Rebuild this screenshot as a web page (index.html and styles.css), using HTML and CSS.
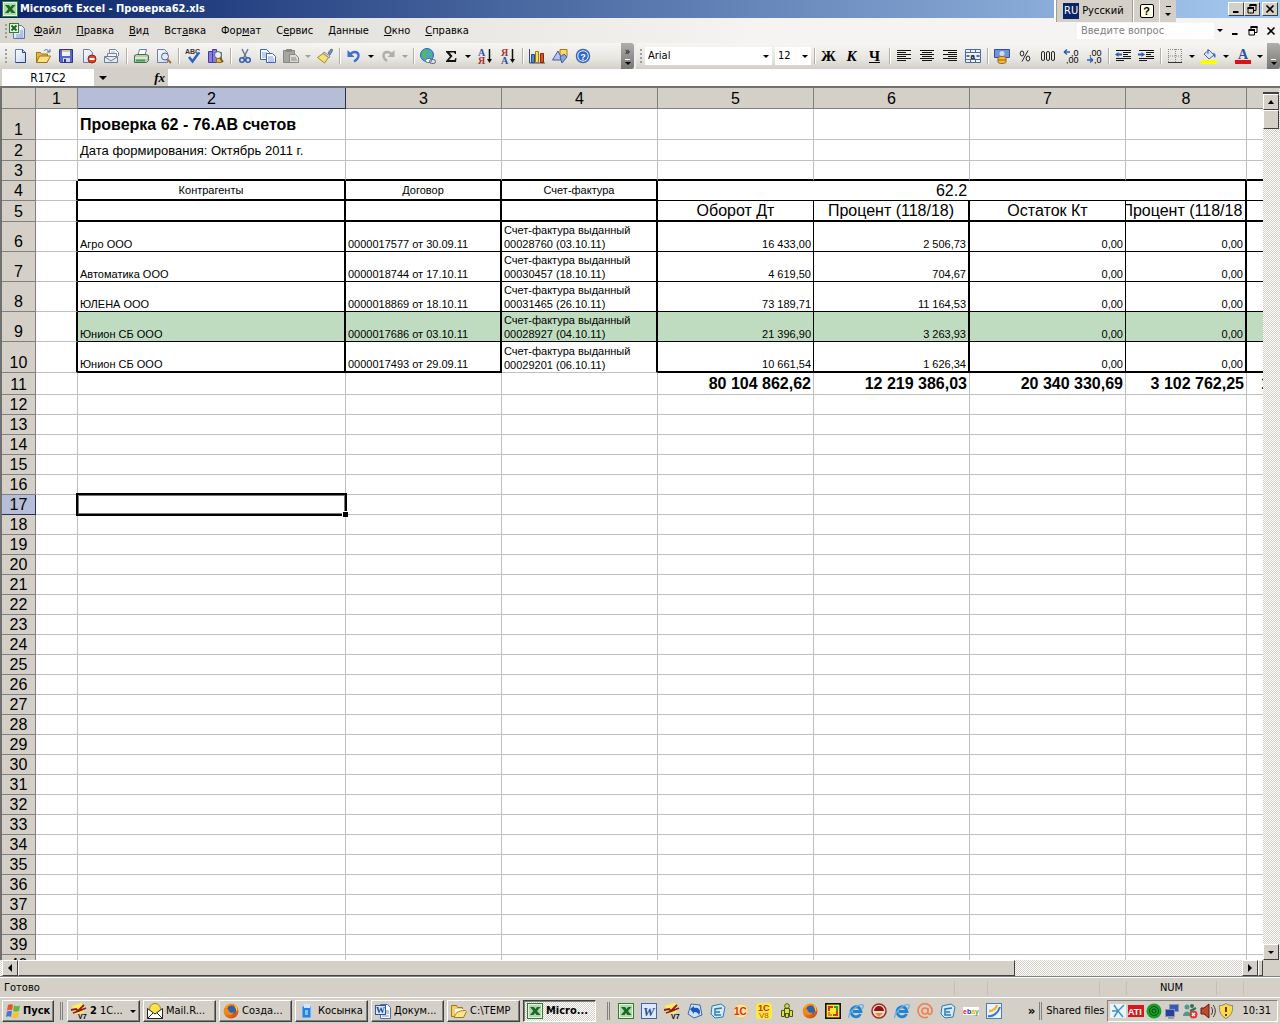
FILE: index.html
```html
<!DOCTYPE html>
<html lang="ru">
<head>
<meta charset="utf-8">
<title>Microsoft Excel - Проверка62.xls</title>
<link rel="stylesheet" href="styles.css">
</head>
<body>
<svg class="paints" aria-hidden="true">
  <defs>
    <linearGradient id="g-paper" x1="0" y1="0" x2="1" y2="1"><stop offset="0" stop-color="#fff"/><stop offset="1" stop-color="#c3d4f2"/></linearGradient>
    <linearGradient id="g-fox" x1="0" y1="0" x2="1" y2="1"><stop offset="0" stop-color="#ffb52e"/><stop offset="1" stop-color="#c83c0c"/></linearGradient>
  </defs>
</svg>
<svg class="sprite" aria-hidden="true">
  <symbol id="excel" viewBox="0 0 16 16"><rect x=".5" y=".5" width="15" height="15" fill="#e4f2e0" stroke="#2f7d32"/><rect x="2" y="2" width="12" height="12" fill="#b5d6ae"/><path d="M3 4h4l1.500 2L10 4h3.500L10 8l3.500 4h-4L8 10l-1.500 2H3l3.300-4z" fill="#176b22"/></symbol>
  <symbol id="book" viewBox="0 0 16 16"><path d="M4.500 2.500h8l3 3v10h-11z" fill="url(#g-paper)" stroke="#5a78b8"/><path d="M7 12h7M7 14h7M11 8h3M11 10h3" stroke="#8aa2d0"/><rect x=".5" y=".5" width="9" height="9" fill="#e4f2e0" stroke="#2f7d32"/><path d="M2.500 2.500l5 5M7.500 2.500l-5 5" stroke="#176b22" stroke-width="2"/></symbol>
  <symbol id="new" viewBox="0 0 16 16"><path d="M3.500 1.500h7l3 3v10h-10z" fill="url(#g-paper)" stroke="#6a7fae"/><path d="M10.500 1.500v3h3M13.500 5v9.500h-10" fill="none" stroke="#2c4270"/></symbol>
  <symbol id="open" viewBox="0 0 16 16"><path d="M1.500 14V4.500h4l1 1.500h6v8z" fill="#e8b93c" stroke="#a0720e"/><path d="M1.500 14.500L4.500 8h11l-3.500 6.500z" fill="#ffe08a" stroke="#a0720e"/><path d="M9 3c1-2 4-2 5 1M12 4h3V1" fill="none" stroke="#4a6fb0"/></symbol>
  <symbol id="save" viewBox="0 0 16 16"><path d="M1.500 1.500h13v13h-12l-1-1z" fill="#5a63c8" stroke="#2c3390"/><path d="M4 2h8v6H4z" fill="#eef2ff"/><path d="M4 3h8" stroke="#e88a30"/><path d="M5 10h7v4H5z" fill="#cfd5ef"/><path d="M6 11h2v3H6z" fill="#2c3390"/></symbol>
  <symbol id="perm" viewBox="0 0 16 16"><path d="M2.500 1.500h6l3 3v10h-9z" fill="url(#g-paper)" stroke="#6a7fae"/><circle cx="11" cy="11" r="4" fill="#d8432a" stroke="#942410"/><path d="M8.500 11h5" stroke="#fff" stroke-width="2"/></symbol>
  <symbol id="mail" viewBox="0 0 16 16"><path d="M5.500 7V1.500h6l3 3V8" fill="#fff" stroke="#7585a5"/><path d="M7 4h4M7 6h6" stroke="#9fb0cc"/><path d="M3.500 5.500h9v4h-9z" fill="#f4f6fa" stroke="#7585a5"/><path d="M.500 8.500h13v6H.500z" fill="#e6eaf3" stroke="#6b7a99"/><path d="M1 9l6 4 6-4" fill="none" stroke="#6b7a99"/></symbol>
  <symbol id="print" viewBox="0 0 16 16"><path d="M5 7l1.500-5.500h7L12 7z" fill="#fff" stroke="#6a7f9e"/><path d="M1.500 7.500l2-1h10l2 1v5l-2 2h-12z" fill="#b9cdb5" stroke="#466a50"/><path d="M2 10h12" stroke="#fff"/><path d="M3 12.500h9" stroke="#3da33d" stroke-width="2"/></symbol>
  <symbol id="preview" viewBox="0 0 16 16"><path d="M1.500 1.500h7l3 3v10h-10z" fill="url(#g-paper)" stroke="#6a7fae"/><circle cx="9" cy="8.500" r="3.500" fill="#dcebf8" stroke="#55667c"/><path d="M11.500 11.500l3.500 3.500" stroke="#a66c2c" stroke-width="2"/></symbol>
  <symbol id="spell" viewBox="0 0 16 16"><text x="0" y="6" font-family="Liberation Sans" font-size="7" font-weight="bold" fill="#333">ABC</text><path d="M4 9l3.500 4.500L14 4.500" fill="none" stroke="#2d62c4" stroke-width="2.500"/></symbol>
  <symbol id="research" viewBox="0 0 16 16"><path d="M.500 3.500h4v11h-4zM4.500 1.500h4v13h-4z" fill="#8c7ce0" stroke="#4a3ca0"/><path d="M8.500 4.500h5v10h-5z" fill="#e3b74a" stroke="#946b14"/><circle cx="10" cy="7" r="3.500" fill="#e6f0fa" stroke="#55667c"/><path d="M12 10l3 4" stroke="#7a5c20" stroke-width="2"/></symbol>
  <symbol id="cut" viewBox="0 0 16 16"><path d="M5 1l4.500 9M11 1L6.500 10" stroke="#667894" stroke-width="1.500"/><circle cx="5" cy="12" r="2.300" fill="none" stroke="#2b5db8" stroke-width="1.500"/><circle cx="11" cy="12" r="2.300" fill="none" stroke="#2b5db8" stroke-width="1.500"/></symbol>
  <symbol id="copy" viewBox="0 0 16 16"><path d="M.500 1.500h6l3 3v7h-9z" fill="#fff" stroke="#3b62b0"/><path d="M2 5h5M2 7h5M2 9h5" stroke="#7f9cd6"/><path d="M6.500 5.500h6l3 3v6h-9z" fill="#fff" stroke="#3b62b0"/><path d="M8 9h5M8 11h6M8 13h6" stroke="#7f9cd6"/></symbol>
  <symbol id="paste" viewBox="0 0 16 16"><path d="M.500 2.500h11v12H.500z" fill="#a8a6a2" stroke="#8a8884"/><path d="M3 1h6v3H3z" fill="#8a8884"/><path d="M6.500 6.500h6l3 3v5h-9z" fill="#dedcd8" stroke="#8a8884"/><path d="M8 10h5M8 12h6" stroke="#8a8884"/></symbol>
  <symbol id="brush" viewBox="0 0 16 16"><path d="M11 5l3-4 2 1-3 5z" fill="#8190b8" stroke="#45527a" stroke-width=".7"/><path d="M7 4l6 4-1 2-6-4z" fill="#cfd6e4" stroke="#5f6a86" stroke-width=".7"/><path d="M6 5.500L.500 9.500l7 5.500 4-5.500z" fill="#f3e27a" stroke="#a08a20"/></symbol>
  <symbol id="undo" viewBox="0 0 16 16"><path d="M4 7c2-4 8-4 8.500 0 .300 3-2 5-4.500 6.500" fill="none" stroke="#3f6fd0" stroke-width="2.300"/><path d="M1.500 2v7h7z" fill="#3f6fd0"/></symbol>
  <symbol id="redo" viewBox="0 0 16 16"><path d="M12 7c-2-4-8-4-8.500 0-.300 3 2 5 3.500 6" fill="none" stroke="#b0aeaa" stroke-width="2.300"/><path d="M14.500 2v7h-7z" fill="#b0aeaa"/></symbol>
  <symbol id="link" viewBox="0 0 16 16"><circle cx="7" cy="7" r="6.500" fill="#4c9fdd" stroke="#256a9c"/><path d="M3 3c3-3 6 0 4 2s1 3-1 5-5-2-3-7M9 3l3 2-1 4-2-2z" fill="#55b955"/><rect x="5.500" y="10.500" width="6" height="4" rx="2" fill="#fff" stroke="#56698c"/><rect x="9.500" y="11.500" width="6" height="4" rx="2" fill="none" stroke="#56698c"/></symbol>
  <symbol id="sum" viewBox="0 0 16 16"><path d="M3 3h10v3h-1l-1-1.500H6.500L9.500 8 6 12h5.500l1-2h1L13 14H3v-1l4-4.500L3 4z" fill="#111"/></symbol>
  <symbol id="sort-a" viewBox="0 0 16 16"><text x="1" y="8" font-family="Liberation Serif" font-size="10" font-weight="bold" fill="#2c4fa8">А</text><text x="1" y="16" font-family="Liberation Serif" font-size="10" font-weight="bold" fill="#b03030">Я</text><path d="M12.500 1v11" stroke="#111" stroke-width="1.500"/><path d="M10 11h5l-2.500 4z" fill="#111"/></symbol>
  <symbol id="sort-z" viewBox="0 0 16 16"><text x="1" y="8" font-family="Liberation Serif" font-size="10" font-weight="bold" fill="#b03030">Я</text><text x="1" y="16" font-family="Liberation Serif" font-size="10" font-weight="bold" fill="#2c4fa8">А</text><path d="M12.500 1v11" stroke="#111" stroke-width="1.500"/><path d="M10 11h5l-2.500 4z" fill="#111"/></symbol>
  <symbol id="chart" viewBox="0 0 16 16"><path d="M.500 1v14H16" fill="none" stroke="#3c4a6c"/><path d="M2.500 6.500h3v8h-3z" fill="#4c88e0" stroke="#1f4c98"/><path d="M6.500 3.500h3v11h-3z" fill="#ffdc50" stroke="#a0780c"/><path d="M11.500 5.500h3v9h-3z" fill="#e0502c" stroke="#8c2408"/></symbol>
  <symbol id="draw" viewBox="0 0 16 16"><path d="M8 1.500h7v7H8z" fill="#ffd964" stroke="#a67c14"/><path d="M6 3L.500 12h10z" fill="#b6c4ee" stroke="#4659a0"/><path d="M8 9l4-3 3 3-5 6z" fill="#8ca4dc" stroke="#4659a0"/></symbol>
  <symbol id="help" viewBox="0 0 16 16"><circle cx="8" cy="8" r="6.500" fill="#fff" stroke="#3465b8" stroke-width="1.500"/><circle cx="8" cy="8" r="4.800" fill="#2f67cf"/><text x="5.300" y="11.500" font-family="Liberation Sans" font-size="9" font-weight="bold" fill="#fff">?</text></symbol>
  <symbol id="al-l" viewBox="0 0 16 16"><path d="M1 2.500h14M1 4.500h9M1 6.500h14M1 8.500h9M1 10.500h14M1 12.500h9" stroke="#111"/></symbol>
  <symbol id="al-c" viewBox="0 0 16 16"><path d="M1 2.500h14M3 4.500h10M1 6.500h14M3 8.500h10M1 10.500h14M3 12.500h10" stroke="#111"/></symbol>
  <symbol id="al-r" viewBox="0 0 16 16"><path d="M1 2.500h14M6 4.500h9M1 6.500h14M6 8.500h9M1 10.500h14M6 12.500h9" stroke="#111"/></symbol>
  <symbol id="merge" viewBox="0 0 16 16"><path d="M.500 1.500h15v13H.500zM.500 4.500h15M.500 11.500h15M5.500 1.500v3M10.500 1.500v3M5.500 11.500v3M10.500 11.500v3" fill="#eef3fb" stroke="#4a68a4"/><text x="5.500" y="10.500" font-family="Liberation Sans" font-size="8" font-weight="bold">a</text><path d="M1.500 8h3M11.500 8h3" stroke="#22458c" stroke-width="1.500"/></symbol>
  <symbol id="money" viewBox="0 0 16 16"><path d="M.500 1.500h15v8H.500z" fill="#6f93dc" stroke="#2e509c"/><circle cx="8" cy="5.500" r="2.500" fill="#cddcf8"/><path d="M4 10c0-2 8-2 8 0v4c0 2-8 2-8 0z" fill="#f5b83a" stroke="#9a650c"/><path d="M4 12h8" stroke="#9a650c"/></symbol>
  <symbol id="pct" viewBox="0 0 16 16"><ellipse cx="5" cy="5.500" rx="1.800" ry="2.500" fill="none" stroke="#222"/><ellipse cx="11" cy="10.500" rx="1.800" ry="2.500" fill="none" stroke="#222"/><path d="M11 2.500l-6 11" stroke="#222"/></symbol>
  <symbol id="thou" viewBox="0 0 16 16"><g fill="none" stroke="#222"><rect x="1.500" y="3.500" width="3" height="9" rx="1.500"/><rect x="6.500" y="3.500" width="3" height="9" rx="1.500"/><rect x="11.500" y="3.500" width="3" height="9" rx="1.500"/></g></symbol>
  <symbol id="dec-up" viewBox="0 0 16 16"><path d="M1 4h6M1 4l3-2.500M1 4l3 2.500" stroke="#2b5db8" stroke-width="1.300"/><text x="8" y="8" font-family="Liberation Sans" font-size="9">,0</text><text x="3" y="15" font-family="Liberation Sans" font-size="9">,00</text></symbol>
  <symbol id="dec-dn" viewBox="0 0 16 16"><path d="M1 12h6M7 12L4 9.500M7 12l-3 2.500" stroke="#2b5db8" stroke-width="1.300"/><text x="3" y="8" font-family="Liberation Sans" font-size="9">,00</text><text x="8" y="15" font-family="Liberation Sans" font-size="9">,0</text></symbol>
  <symbol id="outdent" viewBox="0 0 16 16"><path d="M1 2.500h15M8 4.500h8M8 6.500h5M8 8.500h8M1 10.500h15M1 12.500h8" stroke="#111" stroke-width="1.200"/><path d="M0 6.500L3.500 4v1.500H7v2H3.500V9z" fill="#2b5db8"/></symbol>
  <symbol id="indent" viewBox="0 0 16 16"><path d="M1 2.500h15M8 4.500h8M8 6.500h5M8 8.500h8M1 10.500h15M1 12.500h8" stroke="#111" stroke-width="1.200"/><path d="M7 6.500L3.500 4v1.500H0v2h3.500V9z" fill="#2b5db8"/></symbol>
  <symbol id="borders" viewBox="0 0 16 16"><path d="M1.500 1v13M8.500 1v13M14.500 1v13M1 1.500h14M1 8h14" stroke="#888" stroke-dasharray="1 1"/><path d="M1 14.500h14" stroke="#333"/></symbol>
  <symbol id="fill" viewBox="0 0 16 16"><path d="M3 6l5-4 5 5-5 4z" fill="#dbe6f8" stroke="#4a64a0"/><path d="M7 1v5" stroke="#4a64a0"/><path d="M12 5c3 0 3 3 2 5-1-1-2-2-2-5" fill="#3f74cc"/><path d="M0 12h16v4H0z" fill="#ffff00"/></symbol>
  <symbol id="fcolor" viewBox="0 0 16 16"><text x="3" y="11" font-family="Liberation Serif" font-size="14" font-weight="bold" fill="#2c4fa8">А</text><path d="M0 12h16v4H0z" fill="#e01010"/></symbol>
  <symbol id="restore" viewBox="0 0 10 10"><path d="M3 1h6v5.500H7M3 3V1" fill="none" stroke="#000"/><path d="M2.500 1h7" stroke="#000" stroke-width="2"/><path d="M1 4h5.500v5H1z" fill="none" stroke="#000"/><path d="M.500 4h6.500" stroke="#000" stroke-width="2"/></symbol>
  <symbol id="close" viewBox="0 0 10 10"><path d="M1.500 1.500l7 7M8.500 1.500l-7 7" stroke="#000" stroke-width="1.600"/></symbol>
  <symbol id="min" viewBox="0 0 10 10"><path d="M2 8h5.500" stroke="#000" stroke-width="2"/></symbol>
  <symbol id="flag" viewBox="0 0 16 16"><path d="M3 2c2-1 4-1 5 0L7 7.500c-2-1-3-1-5 0z" fill="#e2562a"/><path d="M9 2.500c2 1 4 1 6 0L14 8c-2 1-4 1-6 0z" fill="#6cb33e"/><path d="M2 8.500c2-1 3-1 5 0L6 14c-2-1-3-1-5 0z" fill="#3c78d8"/><path d="M8 9c2 1 4 1 6 0l-1 5.500c-2 1-4 1-6 0z" fill="#f5c52c"/></symbol>
  <symbol id="onec7" viewBox="0 0 16 16"><path d="M1 3l9-3 5 4-3 6-9 1z" fill="#ffee58"/><path d="M0 7l5-1 2 2 6-6M2 10l6-2 7-3" fill="none" stroke="#8c1c28" stroke-width="1.800"/><text x="7" y="16" font-family="Liberation Sans" font-size="7" font-weight="bold">V7</text></symbol>
  <symbol id="envelope" viewBox="0 0 16 16"><circle cx="8" cy="6" r="5.500" fill="#ffe24a" stroke="#a08a10"/><path d="M.500 5.500L8 11l7.500-5.500v10H.500z" fill="#fff" stroke="#222"/><path d="M.500 15.500L6 10M15.500 15.500L10 10" stroke="#222"/></symbol>
  <symbol id="fox" viewBox="0 0 16 16"><circle cx="8" cy="8" r="7.500" fill="url(#g-fox)"/><circle cx="8.500" cy="7" r="4.500" fill="#2f5fae"/><path d="M1 5c3 0 4 1 5 3s3 2 5 1c-1 3-4 4-7 2S1 8 1 5z" fill="#f08a1c"/><path d="M11 2c3 1 4 4 3 7-1-2-1-4-3-7z" fill="#ffd040"/></symbol>
  <symbol id="cards" viewBox="0 0 16 16"><path d="M3 3h9v12H3z" fill="#2a80dc" stroke="#a9d6ff"/><path d="M5 1h6v4H5z" fill="#cfe8fb"/><path d="M6 7h3v5H6z" fill="#7fc4ff"/></symbol>
  <symbol id="worddoc" viewBox="0 0 16 16"><path d="M5.500 1.500h7l3 3v11h-10z" fill="#fff" stroke="#4a6cb4"/><path d="M11 8h3M11 10h3M7 13h7" stroke="#6b8ccc"/><rect x=".5" y="2.500" width="10" height="9" fill="#dce8fb" stroke="#2c56a8"/><text x="1" y="10" font-family="Liberation Serif" font-size="9" font-weight="bold" fill="#1d459c">W</text></symbol>
  <symbol id="folder" viewBox="0 0 16 16"><path d="M.500 2.500h5l1 2h5v9H.500z" fill="#f6cf5e" stroke="#a07a18"/><path d="M4 6h8v7H4z" fill="#fff"/><path d="M3.500 14.500c0-4 3-7 11-7l1 1-3 6z" fill="#ffe588" stroke="#a07a18"/></symbol>
  <symbol id="word" viewBox="0 0 16 16"><rect x=".5" y=".5" width="15" height="15" fill="#dfe9fb" stroke="#3f66b4"/><text x="2" y="13" font-family="Liberation Serif" font-size="13" font-weight="bold" font-style="italic" fill="#23509f">W</text></symbol>
  <symbol id="sync" viewBox="0 0 16 16"><path d="M4 1l9 1 2 10-8 3-6-4z" fill="#cfe2fa" stroke="#3a68b4"/><path d="M3 6l4-3v2c4-1 6 1 6 4l-1 4c0-3-2-4-5-4v2z" fill="#1c58b8"/></symbol>
  <symbol id="send" viewBox="0 0 16 16"><path d="M2 3l9-2 4 3-2 10-8 1-4-4z" fill="#d6ebfa" stroke="#2c7cb0"/><path d="M12 5L5 6v6h6M6 9h4" fill="none" stroke="#2c7cb0" stroke-width="1.500"/></symbol>
  <symbol id="onec" viewBox="0 0 16 16"><circle cx="8" cy="8" r="7" fill="#ffe9a0" stroke="#f0cb80"/><text x="1" y="12" font-family="Liberation Sans" font-size="10" font-weight="bold" fill="#d8321c">1С</text></symbol>
  <symbol id="onec8" viewBox="0 0 16 16"><rect width="16" height="16" rx="3" fill="#ffe840"/><text x="2" y="8" font-family="Liberation Sans" font-size="9" font-weight="bold" fill="#d02810">1С</text><text x="3" y="15" font-family="Liberation Sans" font-size="8" fill="#b05010">V8</text></symbol>
  <symbol id="robot" viewBox="0 0 16 16"><g fill="#d8e050" stroke="#4c5410"><circle cx="8" cy="3" r="2.300"/><path d="M5.500 5.500h5v5h-5zM2.500 7.500h3v6h-3zM10.500 7.500h3v6h-3zM6.500 10.500h3v4h-3z"/></g></symbol>
  <symbol id="squares" viewBox="0 0 16 16"><rect x=".8" y=".8" width="14.400" height="14.400" fill="#ffe930" stroke="#111" stroke-width="1.600"/><path d="M4 8V4h4" fill="none" stroke="#e03020" stroke-width="2"/><path d="M9 4h3v4" fill="none" stroke="#28a040" stroke-width="2"/><path d="M12 8v4H8" fill="none" stroke="#e03020" stroke-width="2"/><path d="M7 12H4v-3" fill="none" stroke="#e08020" stroke-width="2"/></symbol>
  <symbol id="ie" viewBox="0 0 16 16"><path d="M12.500 11A5 5 0 1 1 13 8.500H5" fill="none" stroke="#2483cf" stroke-width="2.800"/><path d="M1 15C-1 11 10 0 15 2c1 1 0 2-1 4" fill="none" stroke="#5fb4ee" stroke-width="1.300"/></symbol>
  <symbol id="disc" viewBox="0 0 16 16"><circle cx="8" cy="8" r="7" fill="#f4dcd4" stroke="#a82820" stroke-width="1.500"/><path d="M3 8a5 5 0 0 1 10 0z" fill="#8c1414"/><path d="M4 10h8l-4 4z" fill="#e09030"/></symbol>
  <symbol id="at" viewBox="0 0 16 16"><path d="M11 5v5c0 2 4 2 4-2A7 7 0 1 0 11 14M11 8a3 3 0 1 1-6 0 3 3 0 0 1 6 0" fill="none" stroke="#f0804c" stroke-width="1.600"/></symbol>
  <symbol id="ebay" viewBox="0 0 16 16"><rect y="4" width="16" height="8" fill="#fff"/><text x="0" y="11" font-family="Liberation Sans" font-size="7" font-weight="bold"><tspan fill="#e02020">e</tspan><tspan fill="#2030c0">b</tspan><tspan fill="#e8b800">a</tspan><tspan fill="#60a818">y</tspan></text></symbol>
  <symbol id="pen" viewBox="0 0 16 16"><rect x=".5" y=".5" width="15" height="15" fill="#eaf3fd" stroke="#4d7cc0"/><path d="M2 13c5 1 10-3 12-9" fill="none" stroke="#3c78d0" stroke-width="2"/><path d="M3 8c4 0 7-2 8-6" fill="none" stroke="#f0b430" stroke-width="2.500"/></symbol>
  <symbol id="snow" viewBox="0 0 16 16"><path d="M0 1h16v14H0z" fill="#eef5fa"/><path d="M2 8h6M8 8l6-6M8 8l5 6M8 8L4 2M8 8l-4 6" stroke="#3c94c8" stroke-width="1.500"/></symbol>
  <symbol id="ati" viewBox="0 0 16 16"><rect y="2" width="16" height="12" fill="#d81818"/><text x="0" y="12" font-family="Liberation Sans" font-size="9" font-weight="bold" fill="#fff">ATI</text></symbol>
  <symbol id="radar" viewBox="0 0 16 16"><circle cx="8" cy="8" r="7.500" fill="#17a02a"/><circle cx="8" cy="8" r="4.500" fill="none" stroke="#064d10"/><circle cx="8" cy="8" r="2" fill="none" stroke="#064d10"/></symbol>
  <symbol id="net" viewBox="0 0 16 16"><rect x="5.500" y="1.500" width="9" height="7" fill="#3a56c0" stroke="#8a94b4"/><rect x="1.500" y="6.500" width="9" height="7" fill="#26409c" stroke="#8a94b4"/><path d="M4 15h6" stroke="#667"/></symbol>
  <symbol id="users" viewBox="0 0 16 16"><circle cx="5" cy="4" r="2.500" fill="#4c9c8c"/><circle cx="10" cy="3" r="2" fill="#2c7060"/><path d="M1 13c0-6 8-6 8 0z" fill="#4c9c8c"/><path d="M8 8l6-3" stroke="#2c7060" stroke-width="2"/><circle cx="11.500" cy="11.500" r="4" fill="#d83838"/><path d="M10 10l3 3M13 10l-3 3" stroke="#fff" stroke-width="1.400"/></symbol>
  <symbol id="sound" viewBox="0 0 16 16"><path d="M1 5h3l5-4v14l-5-4H1z" fill="#c44830" stroke="#601c10"/><path d="M11 4c2 2 2 6 0 8M13 2c3 3 3 9 0 12" fill="none" stroke="#403028"/></symbol>
  <symbol id="shield" viewBox="0 0 16 16"><path d="M8 .5c2 1.500 4 2 6.500 2 .500 6-1 10-6.500 13C2.500 12.500 1 8.500 1.500 2.500c2.500 0 4.500-.500 6.500-2z" fill="#ffd94a" stroke="#8a8468"/><path d="M8 4v5M8 11v2" stroke="#604800" stroke-width="2"/></symbol>
</svg>

<header class="titlebar">
  <svg class="ic"><use href="#excel"/></svg>
  <h1 class="title">Microsoft Excel - Проверка62.xls</h1>
  <div class="langbar">
    <button class="lang"><span class="ru">RU</span>Русский</button>
    <button class="langhelp" aria-label="Справка по языковой панели"><span>?</span></button>
    <button class="langopt" aria-label="Параметры"><i class="dash"></i><i class="tri"></i></button>
  </div>
  <div class="winbtns">
    <button aria-label="Свернуть"><svg><use href="#min"/></svg></button>
    <button aria-label="Восстановить"><svg><use href="#restore"/></svg></button>
    <button class="last" aria-label="Закрыть"><svg><use href="#close"/></svg></button>
  </div>
</header>

<nav class="menubar">
  <i class="grip"></i>
  <svg class="ic"><use href="#book"/></svg>
  <button class="menu"><u>Ф</u>айл</button>
  <button class="menu"><u>П</u>равка</button>
  <button class="menu"><u>В</u>ид</button>
  <button class="menu">Вст<u>а</u>вка</button>
  <button class="menu">Фор<u>м</u>ат</button>
  <button class="menu">С<u>е</u>рвис</button>
  <button class="menu"><u>Д</u>анные</button>
  <button class="menu"><u>О</u>кно</button>
  <button class="menu"><u>С</u>правка</button>
  <input class="ask" type="text" placeholder="Введите вопрос" aria-label="Введите вопрос">
  <button class="arr" aria-label="Список вопросов"><i class="tri"></i></button>
  <div class="docbtns">
    <button aria-label="Свернуть окно"><svg><use href="#min"/></svg></button>
    <button aria-label="Восстановить окно"><svg><use href="#restore"/></svg></button>
    <button aria-label="Закрыть окно"><svg><use href="#close"/></svg></button>
  </div>
</nav>

<div class="toolbars">
  <div class="tools standard">
    <i class="grip"></i>
    <button class="tb" aria-label="Создать"><svg><use href="#new"/></svg></button>
    <button class="tb" aria-label="Открыть"><svg><use href="#open"/></svg></button>
    <button class="tb" aria-label="Сохранить"><svg><use href="#save"/></svg></button>
    <button class="tb" aria-label="Разрешения"><svg><use href="#perm"/></svg></button>
    <button class="tb" aria-label="Сообщение"><svg><use href="#mail"/></svg></button>
    <i class="sep"></i>
    <button class="tb" aria-label="Печать"><svg><use href="#print"/></svg></button>
    <button class="tb" aria-label="Просмотр"><svg><use href="#preview"/></svg></button>
    <i class="sep"></i>
    <button class="tb" aria-label="Орфография"><svg><use href="#spell"/></svg></button>
    <button class="tb" aria-label="Справочные материалы"><svg><use href="#research"/></svg></button>
    <i class="sep"></i>
    <button class="tb" aria-label="Вырезать"><svg><use href="#cut"/></svg></button>
    <button class="tb" aria-label="Копировать"><svg><use href="#copy"/></svg></button>
    <button class="tb" aria-label="Вставить"><svg><use href="#paste"/></svg></button>
    <button class="arr off" aria-label="Варианты вставки"><i class="tri"></i></button>
    <button class="tb" aria-label="Формат по образцу"><svg><use href="#brush"/></svg></button>
    <i class="sep"></i>
    <button class="tb" aria-label="Отменить"><svg><use href="#undo"/></svg></button>
    <button class="arr" aria-label="Список отмены"><i class="tri"></i></button>
    <button class="tb" aria-label="Вернуть"><svg><use href="#redo"/></svg></button>
    <button class="arr off" aria-label="Список возврата"><i class="tri"></i></button>
    <i class="sep"></i>
    <button class="tb" aria-label="Гиперссылка"><svg><use href="#link"/></svg></button>
    <button class="tb" aria-label="Автосумма"><svg><use href="#sum"/></svg></button>
    <button class="arr" aria-label="Функции"><i class="tri"></i></button>
    <button class="tb" aria-label="По возрастанию"><svg><use href="#sort-a"/></svg></button>
    <button class="tb" aria-label="По убыванию"><svg><use href="#sort-z"/></svg></button>
    <i class="sep"></i>
    <button class="tb" aria-label="Диаграмма"><svg><use href="#chart"/></svg></button>
    <button class="tb" aria-label="Рисование"><svg><use href="#draw"/></svg></button>
    <button class="tb" aria-label="Справка"><svg><use href="#help"/></svg></button>
    <button class="more" aria-label="Другие кнопки"><span>»</span><i class="dash"></i><i class="tri"></i></button>
  </div>
  <div class="tools format">
    <i class="grip"></i>
    <span class="combo font"><select aria-label="Шрифт"><option>Arial</option></select><i class="tri"></i></span>
    <span class="combo size"><select aria-label="Размер"><option>12</option></select><i class="tri"></i></span>
    <i class="sep"></i>
    <button class="tb"><b>Ж</b></button>
    <button class="tb"><b><em>К</em></b></button>
    <button class="tb"><b><u>Ч</u></b></button>
    <i class="sep"></i>
    <button class="tb" aria-label="По левому краю"><svg><use href="#al-l"/></svg></button>
    <button class="tb" aria-label="По центру"><svg><use href="#al-c"/></svg></button>
    <button class="tb" aria-label="По правому краю"><svg><use href="#al-r"/></svg></button>
    <button class="tb" aria-label="Объединить"><svg><use href="#merge"/></svg></button>
    <i class="sep"></i>
    <button class="tb" aria-label="Денежный формат"><svg><use href="#money"/></svg></button>
    <button class="tb" aria-label="Процентный формат"><svg><use href="#pct"/></svg></button>
    <button class="tb" aria-label="С разделителями"><svg><use href="#thou"/></svg></button>
    <button class="tb" aria-label="Увеличить разрядность"><svg><use href="#dec-up"/></svg></button>
    <button class="tb" aria-label="Уменьшить разрядность"><svg><use href="#dec-dn"/></svg></button>
    <i class="sep"></i>
    <button class="tb" aria-label="Уменьшить отступ"><svg><use href="#outdent"/></svg></button>
    <button class="tb" aria-label="Увеличить отступ"><svg><use href="#indent"/></svg></button>
    <i class="sep"></i>
    <button class="tb" aria-label="Границы"><svg><use href="#borders"/></svg></button>
    <button class="arr" aria-label="Виды границ"><i class="tri"></i></button>
    <button class="tb" aria-label="Цвет заливки"><svg><use href="#fill"/></svg></button>
    <button class="arr" aria-label="Цвета заливки"><i class="tri"></i></button>
    <button class="tb" aria-label="Цвет шрифта"><svg><use href="#fcolor"/></svg></button>
    <button class="arr" aria-label="Цвета шрифта"><i class="tri"></i></button>
    <button class="more" aria-label="Другие кнопки"><i class="dash"></i><i class="tri"></i></button>
  </div>
</div>

<div class="formulabar">
  <input class="namebox" type="text" value="R17C2" aria-label="Имя">
  <button class="namearr" aria-label="Список имён"><i class="tri"></i></button>
  <button class="fx">fx</button>
  <input class="formula" type="text" aria-label="Строка формул">
</div>

<main class="sheet">
  <div class="viewport">
    <table class="grid">
      <colgroup><col class="w-head"><col class="w-1"><col class="w-2"><col class="w-n"><col class="w-n"><col class="w-n"><col class="w-n"><col class="w-n"><col class="w-8"><col class="w-n"></colgroup>
      <thead>
        <tr><th></th><th scope="col">1</th><th scope="col" class="sel">2</th><th scope="col">3</th><th scope="col">4</th><th scope="col">5</th><th scope="col">6</th><th scope="col">7</th><th scope="col">8</th><th scope="col"></th></tr>
      </thead>
      <tbody>
        <tr class="r-title"><th scope="row">1</th><td></td><td>Проверка 62 - 76.АВ счетов</td><td></td><td></td><td></td><td></td><td></td><td></td><td></td></tr>
        <tr class="r-date"><th scope="row">2</th><td></td><td>Дата формирования: Октябрь 2011 г.</td><td></td><td></td><td></td><td></td><td></td><td></td><td></td></tr>
        <tr class="r-gap"><th scope="row">3</th><td></td><td></td><td></td><td></td><td></td><td></td><td></td><td></td><td></td></tr>
        <tr class="r-cap boxed"><th scope="row">4</th><td></td><td>Контрагенты</td><td>Договор</td><td>Счет-фактура</td><td class="group" colspan="4">62.2</td><td></td></tr>
        <tr class="r-sub boxed"><th scope="row">5</th><td></td><td></td><td></td><td></td><td>Оборот Дт</td><td>Процент (118/18)</td><td>Остаток Кт</td><td><div class="clip">Процент (118/18)</div></td><td></td></tr>
        <tr class="r-data boxed"><th scope="row">6</th><td></td><td>Агро ООО</td><td>0000017577 от 30.09.11</td><td>Счет-фактура выданный 00028760 (03.10.11)</td><td>16 433,00</td><td>2 506,73</td><td>0,00</td><td>0,00</td><td></td></tr>
        <tr class="r-data boxed"><th scope="row">7</th><td></td><td>Автоматика ООО</td><td>0000018744 от 17.10.11</td><td>Счет-фактура выданный 00030457 (18.10.11)</td><td>4 619,50</td><td>704,67</td><td>0,00</td><td>0,00</td><td></td></tr>
        <tr class="r-data boxed"><th scope="row">8</th><td></td><td>ЮЛЕНА ООО</td><td>0000018869 от 18.10.11</td><td>Счет-фактура выданный 00031465 (26.10.11)</td><td>73 189,71</td><td>11 164,53</td><td>0,00</td><td>0,00</td><td></td></tr>
        <tr class="r-data boxed green"><th scope="row">9</th><td></td><td>Юнион СБ ООО</td><td>0000017686 от 03.10.11</td><td>Счет-фактура выданный 00028927 (04.10.11)</td><td>21 396,90</td><td>3 263,93</td><td>0,00</td><td>0,00</td><td></td></tr>
        <tr class="r-data boxed final"><th scope="row">10</th><td></td><td>Юнион СБ ООО</td><td>0000017493 от 29.09.11</td><td>Счет-фактура выданный 00029201 (06.10.11)</td><td>10 661,54</td><td>1 626,34</td><td>0,00</td><td>0,00</td><td></td></tr>
        <tr class="r-total"><th scope="row">11</th><td></td><td></td><td></td><td></td><td>80 104 862,62</td><td>12 219 386,03</td><td>20 340 330,69</td><td>3 102 762,25</td><td>1</td></tr>
      </tbody>
      <tbody id="blank"></tbody>
    </table>
  </div>
  <div class="vscroll">
    <i class="split"></i>
    <button class="sb" aria-label="Вверх"><i class="tri up"></i></button>
    <i class="thumb"></i>
    <button class="sb end" aria-label="Вниз"><i class="tri"></i></button>
  </div>
</main>

<div class="hscroll">
  <button class="sb" aria-label="Влево"><i class="tri left"></i></button>
  <i class="thumb"></i>
  <button class="sb end" aria-label="Вправо"><i class="tri right"></i></button>
  <i class="split"></i>
  <i class="corner"></i>
</div>

<div class="status">
  <span class="ready">Готово</span>
  <span class="pane w33"></span><span class="pane w112"></span><span class="pane w27"></span><span class="pane w90">NUM</span><span class="pane w27"></span><span class="pane w33"></span>
</div>

<footer class="taskbar">
  <button class="task start"><svg class="ic"><use href="#flag"/></svg><b>Пуск</b></button>
  <i class="tsep"></i>
  <button class="task"><svg class="ic"><use href="#onec7"/></svg><span><b>2</b> 1С...</span><i class="tri"></i></button>
  <button class="task"><svg class="ic"><use href="#envelope"/></svg><span>Mail.R...</span></button>
  <button class="task"><svg class="ic"><use href="#fox"/></svg><span>Созда...</span></button>
  <button class="task"><svg class="ic"><use href="#cards"/></svg><span>Косынка</span></button>
  <button class="task"><svg class="ic"><use href="#worddoc"/></svg><span>Докум...</span></button>
  <button class="task"><svg class="ic"><use href="#folder"/></svg><span>C:\TEMP</span></button>
  <button class="task on"><svg class="ic"><use href="#excel"/></svg><b>Micro...</b></button>
  <i class="tsep wide"></i>
  <div class="quick">
    <svg class="ic"><use href="#excel"/></svg><svg class="ic"><use href="#word"/></svg><svg class="ic"><use href="#onec7"/></svg><svg class="ic"><use href="#sync"/></svg><svg class="ic"><use href="#send"/></svg><svg class="ic"><use href="#onec"/></svg><svg class="ic"><use href="#onec8"/></svg><svg class="ic"><use href="#robot"/></svg><svg class="ic"><use href="#fox"/></svg><svg class="ic"><use href="#squares"/></svg><svg class="ic"><use href="#ie"/></svg><svg class="ic"><use href="#disc"/></svg><svg class="ic"><use href="#ie"/></svg><svg class="ic"><use href="#at"/></svg><svg class="ic"><use href="#send"/></svg><svg class="ic"><use href="#ebay"/></svg><svg class="ic"><use href="#pen"/></svg>
  </div>
  <span class="chev">»</span>
  <i class="tsep"></i>
  <span class="shared">Shared files</span>
  <div class="tray">
    <svg class="ic"><use href="#snow"/></svg><svg class="ic"><use href="#ati"/></svg><svg class="ic"><use href="#radar"/></svg><svg class="ic"><use href="#net"/></svg><svg class="ic"><use href="#users"/></svg><svg class="ic"><use href="#sound"/></svg><svg class="ic"><use href="#shield"/></svg>
    <time>10:31</time>
  </div>
</footer>
<script src="grid.js"></script>
</body>
</html>
```

FILE: styles.css
```css
* { box-sizing: border-box; }
html, body { height: 100%; }
body {
  margin: 0;
  display: flex;
  flex-direction: column;
  overflow: hidden;
  background: #d4d0c8;
  color: #000;
  font: 11px/14px "DejaVu Sans Condensed", "DejaVu Sans", sans-serif;
}
button, input, select {
  font: inherit;
  color: inherit;
  margin: 0;
  padding: 0;
  border: 0;
  border-radius: 0;
  background: none;
  outline: 0;
}
.paints { position: absolute; width: 0; height: 0; }
.sprite { display: none; }
.ic { width: 16px; height: 16px; flex: none; }
i { display: block; flex: none; }

/* small triangles */
.tri { width: 0; height: 0; border: 3px solid transparent; border-top-color: #000; border-bottom: 0; }
.tri.up { border: 3px solid transparent; border-bottom: 4px solid #000; border-top: 0; }
.tri.left { border: 4px solid transparent; border-right-color: #000; border-left: 0; }
.tri.right { border: 4px solid transparent; border-left-color: #000; border-right: 0; }
.off .tri { border-top-color: #a0a0a0; }
.dash { width: 5px; height: 1px; background: #000; }

/* title bar */
.titlebar {
  position: relative;
  flex: none;
  display: flex;
  align-items: center;
  height: 18px;
  padding: 0 2px;
  background: linear-gradient(90deg, #0a246a, #a6caf0);
}
.title { margin: 0 0 0 2px; color: #fff; font: bold 11px/16px "DejaVu Sans Condensed", sans-serif; }
.langbar {
  position: absolute;
  z-index: 2;
  top: 0;
  right: 104px;
  display: flex;
  width: 122px;
  height: 22px;
  background: #d4d0c8;
  border-left: 2px solid #fff;
}
.lang { display: flex; align-items: center; gap: 3px; width: 77px; padding-left: 6px; border-left: 1px solid #a09c94; }
.ru { background: #0a246a; color: #fff; padding: 1px; }
.langhelp { display: flex; align-items: center; justify-content: center; width: 26px; border-left: 1px solid #fff; box-shadow: -1px 0 #a09c94; }
.langhelp span { width: 14px; height: 14px; border: 1px solid #000; border-radius: 2px; background: #ffffe1; font: bold 11px/12px "Liberation Sans", sans-serif; }
.langopt { display: flex; flex-direction: column; align-items: center; justify-content: center; gap: 6px; flex: 1; border-left: 1px solid #fff; }
.winbtns { display: flex; margin-left: auto; }
.winbtns button {
  width: 16px; height: 14px;
  display: flex; align-items: center; justify-content: center;
  background: #d4d0c8;
  border: 1px solid;
  border-color: #fff #404040 #404040 #fff;
}
.winbtns .last { margin-left: 2px; }
.winbtns svg { width: 10px; height: 10px; }

/* menu bar */
.menubar {
  flex: none;
  display: flex;
  align-items: center;
  height: 25px;
  padding: 0 1px 0 5px;
  background: linear-gradient(90deg, #d9d6d0, #f5f4f2 60%);
}
.grip { width: 2px; height: 14px; margin-right: 3px; background: repeating-linear-gradient(#a09e9a 0 2px, transparent 2px 4px); }
.menubar .grip { margin-right: 2px; }
.menu { padding: 0 8px 0 7px; line-height: 18px; }
.menubar .ic + .menu { margin-left: 2px; }
.ask { width: 137px; height: 16px; margin-left: auto; padding-left: 4px; background: #fff; }
.ask::placeholder { color: #808080; opacity: 1; }
.docbtns { display: flex; gap: 2px; margin-left: 2px; }
.docbtns button { width: 16px; height: 16px; display: flex; align-items: center; justify-content: center; }
.docbtns svg { width: 10px; height: 10px; }

/* toolbars */
.toolbars { flex: none; display: flex; height: 26px; background: #f0eeeb; }
.tools { display: flex; align-items: center; background: linear-gradient(#f7f6f4, #e8e6e1 60%, #d2cfc8); }
.standard { width: 634px; padding-left: 5px; }
.standard .grip { margin-right: 1px; }
.format { flex: 1; margin-left: 2px; padding-left: 4px; }
.tb { flex: none; width: 23px; height: 22px; display: flex; align-items: center; justify-content: center; font: 15px/16px "Liberation Serif", serif; }
.tb svg { width: 16px; height: 16px; }
.arr { flex: none; width: 11px; height: 22px; display: flex; align-items: center; justify-content: center; }
.sep { width: 1px; height: 16px; margin: 0 2px 0 3px; background: #b4b0a8; box-shadow: 1px 0 #fff; }
.more {
  width: 13px; height: 26px; margin-left: auto;
  display: flex; flex-direction: column; align-items: center; justify-content: flex-end; gap: 2px;
  padding-bottom: 4px;
  background: linear-gradient(#b0aeaa, #777);
  border-radius: 0 3px 3px 0;
  color: #000;
  font-size: 10px; line-height: 10px;
}
.more .dash { background: #fff; }
.combo { position: relative; flex: none; height: 18px; margin-right: 3px; background: #fff; }
.combo select { appearance: none; width: 100%; height: 18px; padding-left: 3px; }
.combo .tri { position: absolute; right: 3px; top: 8px; pointer-events: none; }
.combo.font { width: 127px; }
.combo.size { width: 36px; margin-right: 0; }

/* formula bar */
.formulabar { flex: none; display: flex; height: 17px; padding-left: 2px; }
.namebox { width: 92px; background: #fff; text-align: center; font-size: 12px; }
.namearr { width: 17px; display: flex; align-items: center; justify-content: center; }
.namearr .tri { border-width: 4px 4px 0; }
.fx { width: 57px; padding: 0 3px; text-align: right; font: italic bold 13px/16px "Liberation Serif", serif; }
.formula { flex: 1; background: #fff; }

/* sheet */
.sheet { flex: 1; min-height: 0; display: flex; border: solid #707070; border-width: 2px 0 0 2px; }
.viewport { flex: 1; min-width: 0; overflow: hidden; background: #fff; }
.grid { table-layout: fixed; width: 1401px; border-collapse: separate; border-spacing: 0; font-family: "Liberation Sans", Arial, sans-serif; }
.w-head { width: 34px; }
.w-1 { width: 42px; }
.w-2 { width: 268px; }
.w-n { width: 156px; }
.w-8 { width: 121px; }
.grid th, .grid td { padding: 0; border: solid #c0c0c0; border-width: 0 1px 1px 0; white-space: nowrap; vertical-align: bottom; }
.grid th { background: #d4d0c8; border-color: #808080; font-weight: normal; font-size: 16px; line-height: 18px; }
.grid thead th { height: 21px; }
.grid th.sel { background: #b6bdd6; border-color: #26305a; }
.grid tbody tr { height: 20px; }
.grid td { padding: 0 2px; }

.grid .r-title { height: 31px; }
.r-title td { font-weight: bold; font-size: 16px; line-height: 28px; }
.grid .r-date { height: 21px; }
.r-date td { font-size: 13px; line-height: 18px; }
.grid .r-sub { height: 21px; }
.grid .r-data { height: 30px; }
.grid .final { height: 31px; }
.grid .r-total { height: 22px; }

.grid .r-gap td:nth-child(n+3) { border-bottom: 2px solid #000; }
.grid .boxed td:nth-child(n+3) { border-color: #000; }
.grid .boxed td:nth-child(2), .grid .boxed td:nth-child(3), .grid .boxed td:nth-child(4), .grid .boxed td:nth-child(5),
.grid .boxed td:nth-child(7), .grid .boxed td:nth-child(9), .grid .boxed .group { border-right: 2px solid #000; }
.grid .r-cap td:nth-child(-n+5):nth-child(n+3), .grid .r-sub td:nth-child(n+3), .grid .final td:nth-child(n+3) { border-bottom-width: 2px; }
.grid .final td:nth-child(5) { border-bottom: 1px solid #c0c0c0; }
.r-cap td { text-align: center; line-height: 18px; }
.r-cap .group, .r-sub td { font-size: 16px; line-height: 18px; text-align: center; }
.grid .r-sub td:nth-child(9) { padding: 0 2px 0 0; }
.clip { display: flex; justify-content: center; overflow: hidden; }
.r-data td { line-height: 14px; }
.grid .r-data td:nth-child(5) { white-space: normal; }
.r-data td:nth-child(n+6) { text-align: right; }
.grid .green td:nth-child(n+3) { background: #c0dcc0; }
.r-total td { font-weight: bold; font-size: 16px; line-height: 20px; text-align: right; }
.grid .r-total td:last-child { text-align: left; padding-left: 14px; }

/* current cell frame and fill handle */
.grid td.active { position: relative; }
.active::before { content: ""; position: absolute; inset: -2px; border: 2px solid #000; box-shadow: inset 0 0 0 1px #777; }
.active::after { content: ""; position: absolute; right: -3px; bottom: -3px; width: 5px; height: 5px; background: #000; border: solid #fff; border-width: 1px 0 0 1px; }

/* scroll bars */
.vscroll, .hscroll { flex: none; display: flex; background: repeating-conic-gradient(#fff 0 25%, #d4d0c8 0 50%) 0 0 / 2px 2px; }
.vscroll { flex-direction: column; width: 17px; padding-right: 1px; }
.vscroll .split { height: 6px; background: #d4d0c8; border-bottom: 2px solid #404040; }
.sb, .thumb, .hscroll .split {
  flex: none;
  background: #d4d0c8;
  border: 1px solid;
  border-color: #fff #404040 #404040 #fff;
}
.sb { width: 16px; height: 16px; display: flex; align-items: center; justify-content: center; }
.vscroll .thumb { height: 19px; }
.vscroll .end { margin-top: auto; }
.hscroll { height: 17px; padding-left: 2px; border-bottom: 1px solid #808080; }
.hscroll .thumb { width: 78%; }
.hscroll .end { margin-left: auto; }
.hscroll .split { width: 5px; }
.hscroll .corner { width: 17px; background: #d4d0c8; }

/* status bar */
.status { flex: none; display: flex; align-items: center; height: 20px; padding: 0 4px; border-top: 1px solid #fff; }
.ready { flex: 1; }
.pane { height: 14px; border-left: 1px solid #c4c0b8; text-align: center; }
.w27 { width: 27px; }
.w33 { width: 33px; }
.w90 { width: 90px; }
.w112 { width: 112px; }

/* task bar */
.taskbar { flex: none; display: flex; align-items: center; height: 27px; padding: 0 2px; border-top: 1px solid #fff; }
.task {
  flex: none;
  display: flex; align-items: center; gap: 3px;
  width: 73px; height: 22px; margin-right: 3px; padding: 0 3px;
  border: 1px solid;
  border-color: #fff #404040 #404040 #fff;
  box-shadow: inset -1px -1px #808080;
  white-space: nowrap;
}
.task .tri { margin-left: auto; }
.task.start { width: 52px; gap: 2px; padding: 0 2px; margin-right: 6px; }
.task.on {
  border-color: #404040 #fff #fff #404040;
  box-shadow: inset 1px 1px #808080;
  background: repeating-conic-gradient(#fff 0 25%, #d4d0c8 0 50%) 0 0 / 2px 2px;
}
.tsep { width: 3px; height: 18px; margin-right: 4px; background: #d4d0c8; border: solid; border-width: 0 1px 0 1px; border-color: #fff #808080; }
.tsep.wide { margin: 0 8px; }
.quick { display: flex; gap: 7px; }
.chev { margin-left: auto; margin-right: 4px; font-weight: bold; font-size: 13px; }
.shared { margin-right: 3px; }
.tray { display: flex; align-items: center; gap: 2px; height: 22px; padding: 0 6px 0 2px; border: 1px solid; border-color: #808080 #fff #fff #808080; }
.tray time { margin-left: 6px; }
```

FILE: grid.js
```js
// Blank rows below the report; row 17 holds the current cell in column 2.
const body = document.getElementById('blank');
for (let n = 12; n <= 40; n++) {
  const row = body.insertRow();
  const head = document.createElement('th');
  head.scope = 'row';
  head.textContent = n;
  row.append(head);
  for (let c = 1; c <= 9; c++) {
    const cell = row.insertCell();
    if (n === 17 && c === 2) {
      head.className = 'sel';
      cell.className = 'active';
    }
  }
}
```
